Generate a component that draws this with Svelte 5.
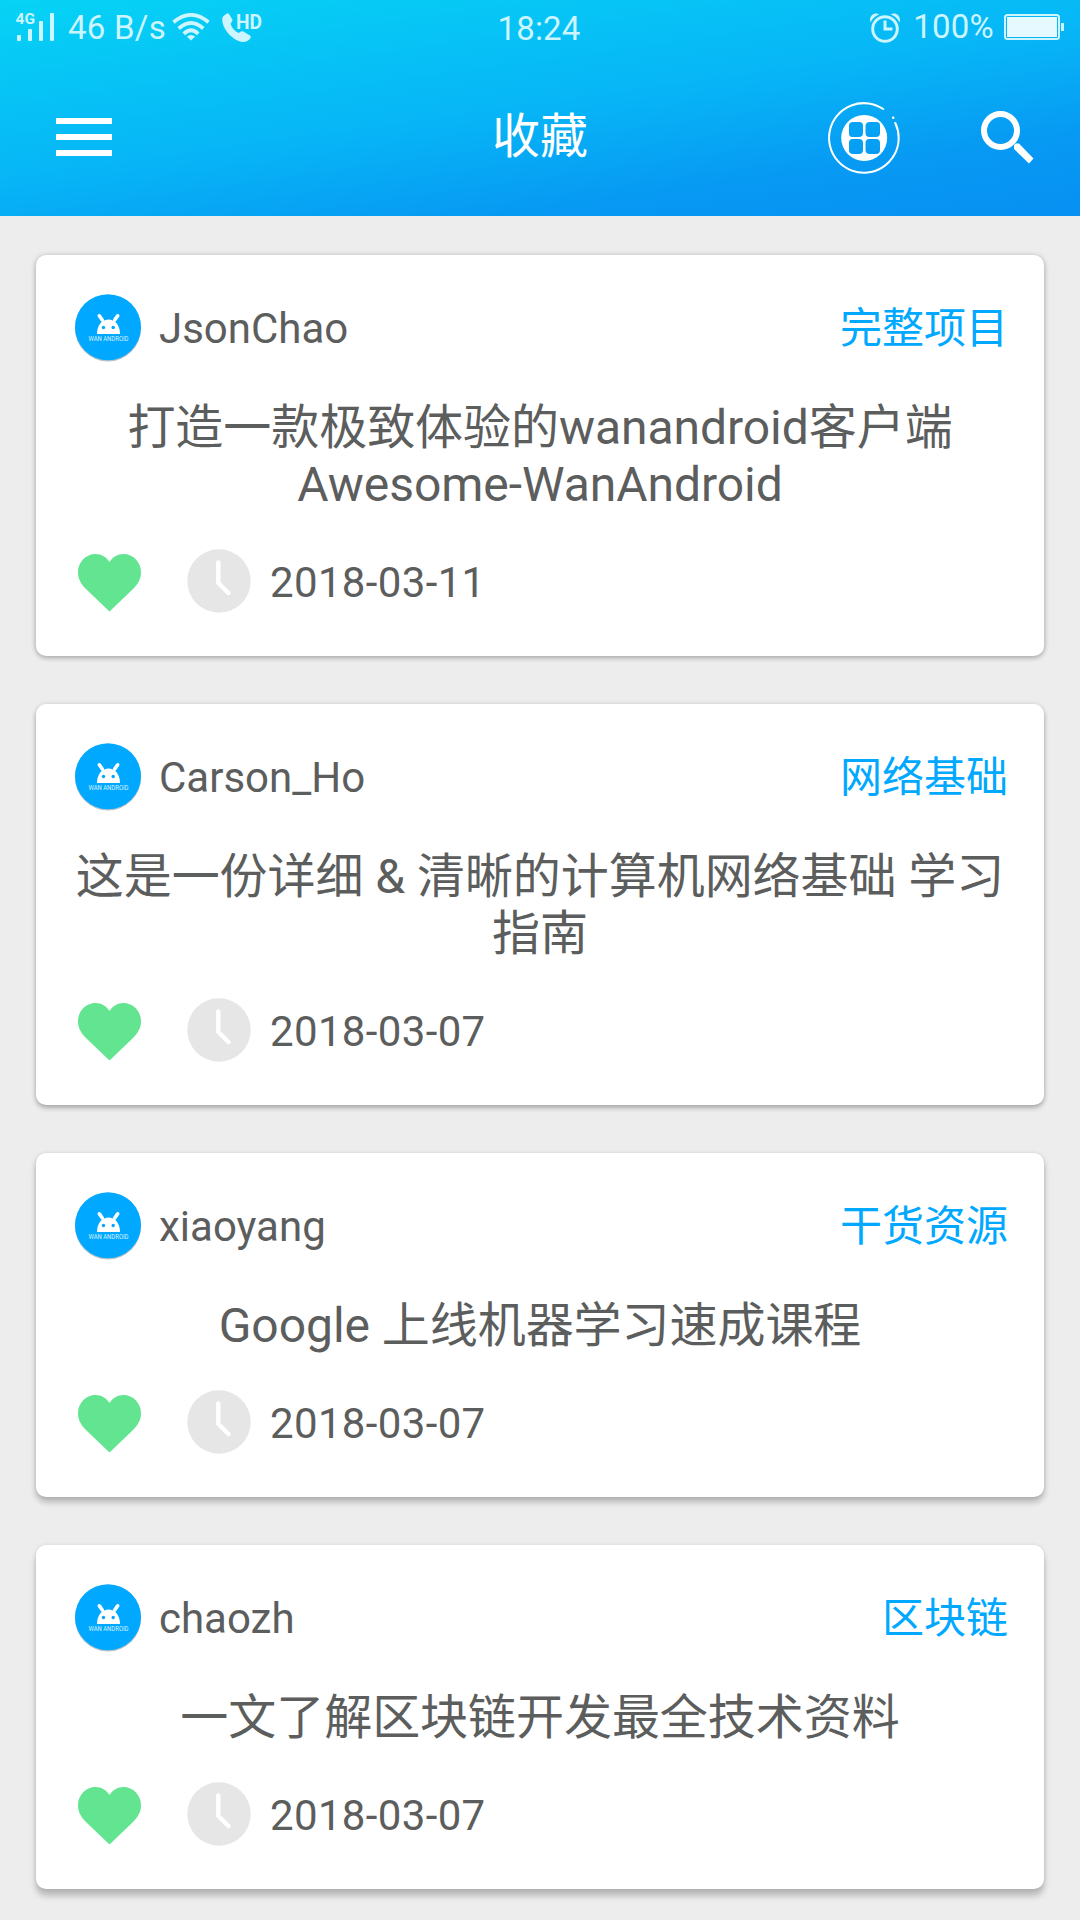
<script>
  const articles = [
    { author: 'JsonChao', tag: '完整项目', lines: ['打造一款极致体验的wanandroid客户端', 'Awesome-WanAndroid'], date: '2018-03-11' },
    { author: 'Carson_Ho', tag: '网络基础', lines: ['这是一份详细 & 清晰的计算机网络基础 学习', '指南'], date: '2018-03-07' },
    { author: 'xiaoyang', tag: '干货资源', lines: ['Google 上线机器学习速成课程'], date: '2018-03-07' },
    { author: 'chaozh', tag: '区块链', lines: ['一文了解区块链开发最全技术资料'], date: '2018-03-07' }
  ];
</script>

<div class="screen">
  <header>
    <div class="status">
      <div class="left">
        <svg class="signal" width="40" height="30" viewBox="0 0 40 30">
          <text x="0.5" y="12.3" textLength="19.5" lengthAdjust="spacingAndGlyphs">4G</text>
          <rect x="2" y="23" width="4" height="6" rx="1" />
          <rect x="13" y="17" width="4" height="12" rx="1" />
          <rect x="24" y="9" width="4" height="20" rx="1" />
          <rect x="35" y="1" width="4" height="28" rx="1" />
        </svg>
        <span class="speed">46 B/s</span>
        <svg class="wifi" width="38" height="28" viewBox="0 0 38 28">
          <g fill="none" stroke="currentColor" stroke-width="3.8">
            <path d="M1.500 9.300Q19 -5.500 36.500 9.300" />
            <path d="M6.700 15.500Q19 4.400 31.300 15.500" />
            <path d="M11.800 20.800Q19 13.800 26.200 20.800" />
          </g>
          <path d="M19 27.500L14.800 23.500Q19 20.500 23.200 23.500Z" />
        </svg>
        <svg class="call" width="46" height="30" viewBox="0 0 46 30">
          <path d="M1.200 3.200L4.800.500Q6.200-.200 7.200 1.300L10.300 6.500Q11 7.800 9.800 8.900L8.600 10.500C9.500 14.500 12.500 18 16.500 20L18.800 18.600Q20 17.800 21.300 18.600L28 22.500Q29.300 23.500 28.500 25C26 29 21 30 16.500 28C8 24.500 .500 15 .200 7Q.200 4.500 1.200 3.200Z" />
          <text x="14" y="16" textLength="26" lengthAdjust="spacingAndGlyphs">HD</text>
        </svg>
      </div>
      <time>18:24</time>
      <div class="right">
        <svg class="alarm" width="32" height="30" viewBox="0 0 32 30">
          <circle cx="16" cy="16" r="12.300" fill="none" stroke="currentColor" stroke-width="3" />
          <path d="M16 7.500V16H23.500" fill="none" stroke="currentColor" stroke-width="3" />
          <path d="M1.500 9.500C-.500 3 5 -1.500 10.500 1.300C6 3 3.500 5.500 1.500 9.500ZM30.500 9.500C32.500 3 27 -1.500 21.500 1.300C26 3 28.500 5.500 30.500 9.500Z" />
        </svg>
        <span class="percent">100%</span>
        <svg class="battery" width="60" height="26" viewBox="0 0 60 26">
          <rect x="1" y="1" width="54" height="24" rx="2.500" fill="none" stroke="currentColor" stroke-width="2" />
          <rect class="charge" x="3" y="3" width="50" height="20" />
          <rect x="57" y="9" width="3" height="8" />
        </svg>
      </div>
    </div>
    <div class="toolbar">
      <svg class="menu" width="56" height="38" viewBox="0 0 56 38"><path d="M0 0H56V6H0ZM0 16H56V22H0ZM0 32H56V38H0Z" /></svg>
      <h1>收藏</h1>
      <div class="actions">
        <svg class="grid" width="72" height="72" viewBox="0 0 72 72">
          <path d="M55.200 7A34.800 34.800 0 1 0 67.300 21" fill="none" stroke="#fff" stroke-width="2" stroke-linecap="round" />
          <circle cx="65.200" cy="15.800" r="1.300" />
          <path fill-rule="evenodd" d="M36.200 13a23 23 0 1 0 0 46a23 23 0 1 0 0-46ZM25 20H31.500Q35 20 35 23.500V31Q35 35 31 35H24.500Q21 35 21 31.500V24Q21 20 25 20ZM42 20H48.500Q52 20 52 23.500V31Q52 35 48 35H41.500Q37.500 35 37.500 31V24Q37.500 20 42 20ZM24.500 37H31Q35 37 35 41V48Q35 52 31 52H25Q21 52 21 48V41Q21 37 24.500 37ZM41.500 37H48Q52 37 52 41V48Q52 52 48 52H42Q37.500 52 37.500 48V41Q37.500 37 41.500 37Z" />
        </svg>
        <svg class="search" width="53" height="53" viewBox="0 0 53 53">
          <circle cx="19.500" cy="19.500" r="16.500" fill="none" stroke="#fff" stroke-width="6" />
          <path d="M33 38V34L35 32.500H38L52.500 47.500L48 52.500Z" />
        </svg>
      </div>
    </div>
  </header>

  <main>
    {#each articles as a}
      <article>
        <div class="top">
          <svg class="avatar" width="68" height="70" viewBox="0 0 68 70">
            <circle cx="34" cy="34.500" r="33" class="shade" />
            <circle cx="34" cy="33.200" r="33" fill="#00a8ff" />
            <path fill="#fff" d="M23 40C23 20.700 46 20.700 46 40Z" />
            <path d="M25.300 21.800L28.300 26M43.700 21.800L40.700 26" stroke="#fff" stroke-width="3.600" stroke-linecap="round" />
            <circle cx="29.500" cy="33.500" r="1.700" fill="#00a8ff" /><circle cx="39.200" cy="33.500" r="1.700" fill="#00a8ff" />
            <text x="34.500" y="47" text-anchor="middle" textLength="40" lengthAdjust="spacingAndGlyphs">WAN ANDROID</text>
          </svg>
          <span class="author">{a.author}</span>
          <span class="tag">{a.tag}</span>
        </div>
        <h2>{#each a.lines as line}<span>{line}</span>{/each}</h2>
        <div class="bottom">
          <svg class="heart" width="63" height="58" viewBox="0 0 63 58"><path d="M31.500 57.500L8.500 35.500C3 30 0 25 0 18C0 8 8 0 17.500 0C23.500 0 28.500 3 31.500 8C34.500 3 39.500 0 45.500 0C55 0 63 8 63 18C63 25 60 30 54.500 35.500Z" /></svg>
          <svg class="clock" width="64" height="64" viewBox="0 0 64 64"><circle cx="32" cy="32" r="31.700" /><path d="M31.300 13.500V34L41.500 44" /></svg>
          <span class="date">{a.date}</span>
        </div>
      </article>
    {/each}
  </main>
</div>

<style>
  :global(body) { background: #ededed; }
  .screen { width: 1080px; height: 1920px; overflow: hidden; background: #ededed; font-family: Roboto, "Noto Sans CJK SC", sans-serif; color: #5c5d5d; }
  svg { display: block; flex: none; }
  header { height: 216px; background: linear-gradient(172deg, #06d3f5 0%, #07b5f6 50%, #079af3 77%, #0790f2 100%); color: #fff; }
  .status { height: 54px; display: grid; grid-template-columns: 1fr auto 1fr; color: #ccf5ff; fill: currentColor; font-size: 33px; line-height: 54px; }
  .left, .right { display: flex; align-items: flex-start; }
  .left { padding-left: 15px; }
  .right { justify-content: flex-end; padding-right: 16px; }
  .signal { margin-top: 12px; overflow: visible; }
  .signal text { font-size: 15px; font-weight: 700; }
  .speed { margin: 1px 0 0 13px; width: 98px; white-space: nowrap; letter-spacing: .25px; }
  .wifi { margin: 13px 0 0 6px; }
  .call { margin: 13px 0 0 12px; overflow: visible; }
  .call text { font-size: 21px; font-weight: 700; }
  time { padding: 2px 2px 0 0; letter-spacing: .2px; }
  .alarm { margin-top: 13px; }
  .percent { margin: 0 10px 0 12px; letter-spacing: .25px; }
  .battery { margin-top: 14px; }
  .charge { fill: #e6f9ff; }
  .toolbar { height: 162px; display: grid; grid-template-columns: 1fr auto 1fr; align-items: start; padding: 0 46px 0 46px; fill: #fff; }
  .menu { margin: 64px 0 0 10px; }
  h1 { margin: 48px 0 0; font-size: 48px; line-height: 70px; font-weight: 400; }
  .actions { display: flex; justify-content: flex-end; gap: 81px; }
  .grid { margin-top: 48px; }
  .search { margin-top: 57px; }
  main { display: flex; flex-direction: column; gap: 48px; padding: 39px 36px; }
  article { box-sizing: border-box; flex: none; padding: 39px 36px 43px 38px; background: #fff; border-radius: 10px; box-shadow: 0 2px 5px rgba(0,0,0,.24), 0 0 6px rgba(0,0,0,.12); }
  article:nth-child(2) { box-shadow: 0 3px 5px rgba(0,0,0,.26), 0 0 5px rgba(0,0,0,.1); }
  article:nth-child(3) { box-shadow: 0 5px 6px rgba(0,0,0,.24), 0 0 4px rgba(0,0,0,.1); }
  article:nth-child(4) { box-shadow: 0 7px 6px rgba(0,0,0,.22), 0 0 4px rgba(0,0,0,.1); }
  .top { height: 70px; display: flex; align-items: center; }
  .shade { fill: #b9c3c8; }
  .avatar text { fill: #d4f0ff; font-size: 6.500px; }
  .author { margin-left: 17px; font-size: 42px; line-height: 50px; }
  .tag { margin-left: auto; color: #00a8ff; font-size: 42px; line-height: 50px; }
  h2 { margin: 35px 2px 0 0; font-weight: 400; font-size: 48px; line-height: 57px; display: flex; flex-direction: column; align-items: center; white-space: nowrap; letter-spacing: -.05px; }
  .bottom { height: 64px; margin-top: 36px; display: flex; align-items: center; font-size: 42px; padding-left: 4px; }
  .heart { fill: #62e491; margin-top: 4px; }
  .clock { fill: #e6e6e6; margin: 0 19px 0 46px; }
  .clock path { fill: none; stroke: #fff; stroke-width: 4.500; stroke-linecap: round; stroke-linejoin: round; }
  .date { letter-spacing: .35px; padding-top: 2px; }
</style>
